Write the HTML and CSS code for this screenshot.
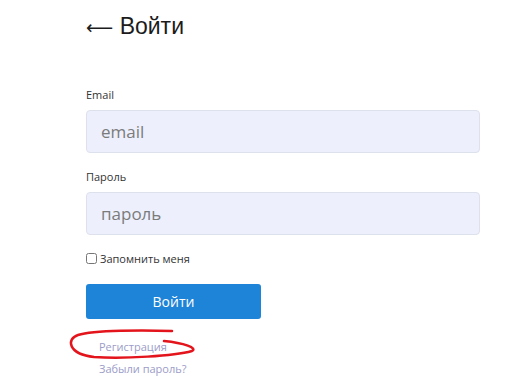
FILE: index.html
```html
<!DOCTYPE html>
<html lang="ru">
<head>
    <meta charset="UTF-8">
    <meta name="viewport" content="width=device-width, initial-scale=1.0">
    <title>Войти</title>
    <link rel="stylesheet" href="styles.css">
</head>
<body>
    <div class="container">
        <h1 class="title"><span class="arrow">&#10229;</span> Войти</h1>

        <form class="login-form">
            <label class="field-label" for="email">Email</label>
            <input class="field-input" type="text" id="email" placeholder="email">

            <label class="field-label" for="password">Пароль</label>
            <input class="field-input" type="password" id="password" placeholder="пароль">

            <label class="remember">
                <input type="checkbox" class="remember-box">
                <span>Запомнить меня</span>
            </label>

            <button type="submit" class="submit-btn">Войти</button>
        </form>

        <div class="links">
            <a href="#" class="link link-register">Регистрация
                <svg class="scribble" width="136" height="40" viewBox="0 0 136 40">
                    <path d="M108 5 C 80 4, 30 4, 14 9 C 2 13, 4 28, 30 31 C 60 33, 110 30, 128 25 C 134 22, 120 17, 100 15" fill="none" stroke="#e3141b" stroke-width="2.5" stroke-linecap="round"/>
                </svg>
            </a>
            <a href="#" class="link">Забыли пароль?</a>
        </div>
    </div>
</body>
</html>
```

FILE: styles.css
```css
body {
    font-family: "Open Sans", "Liberation Sans", sans-serif;
    background-color: #fff;
    color: #222;
    margin: 0;
}

.container {
    width: 394px;
    padding: 11px 0 0 86px;
}

.title {
    font-family: "Liberation Sans", sans-serif;
    font-size: 23px;
    font-weight: 400;
    margin: 0 0 46px 0;
    color: #1c1c1c;
    line-height: 30px;
}

.arrow {
    font-family: "DejaVu Sans", sans-serif;
    font-size: 19px;
}

.login-form {
    display: flex;
    flex-direction: column;
}

.field-label {
    font-size: 11px;
    color: #333;
    margin-bottom: 8px;
    line-height: 14px;
}

.field-input {
    height: 43px;
    box-sizing: border-box;
    background-color: #edf0fc;
    border: 1px solid #dde1ec;
    border-radius: 4px;
    padding: 0 14px;
    font-family: "Open Sans", sans-serif;
    font-size: 17px;
    color: #333;
    margin-bottom: 17px;
}

.field-input::placeholder {
    color: #7b7b7b;
}

.remember {
    display: flex;
    align-items: center;
    gap: 3px;
    font-size: 11px;
    color: #333;
    margin-top: -1px;
}

.remember-box {
    width: 11px;
    height: 11px;
    margin: 0;
}

.submit-btn {
    width: 175px;
    height: 35px;
    margin-top: 18px;
    background-color: #1e84d8;
    color: #fff;
    border: none;
    border-radius: 3px;
    font-family: "Open Sans", sans-serif;
    font-size: 14px;
    cursor: pointer;
}

.links {
    display: flex;
    flex-direction: column;
    align-items: flex-start;
    padding: 21px 0 0 13px;
    gap: 8px;
}

.link {
    font-size: 11px;
    color: #9c9cc8;
    text-decoration: none;
    line-height: 14px;
}

.link-register {
    position: relative;
}

.scribble {
    position: absolute;
    left: -35px;
    top: -14px;
}
```
